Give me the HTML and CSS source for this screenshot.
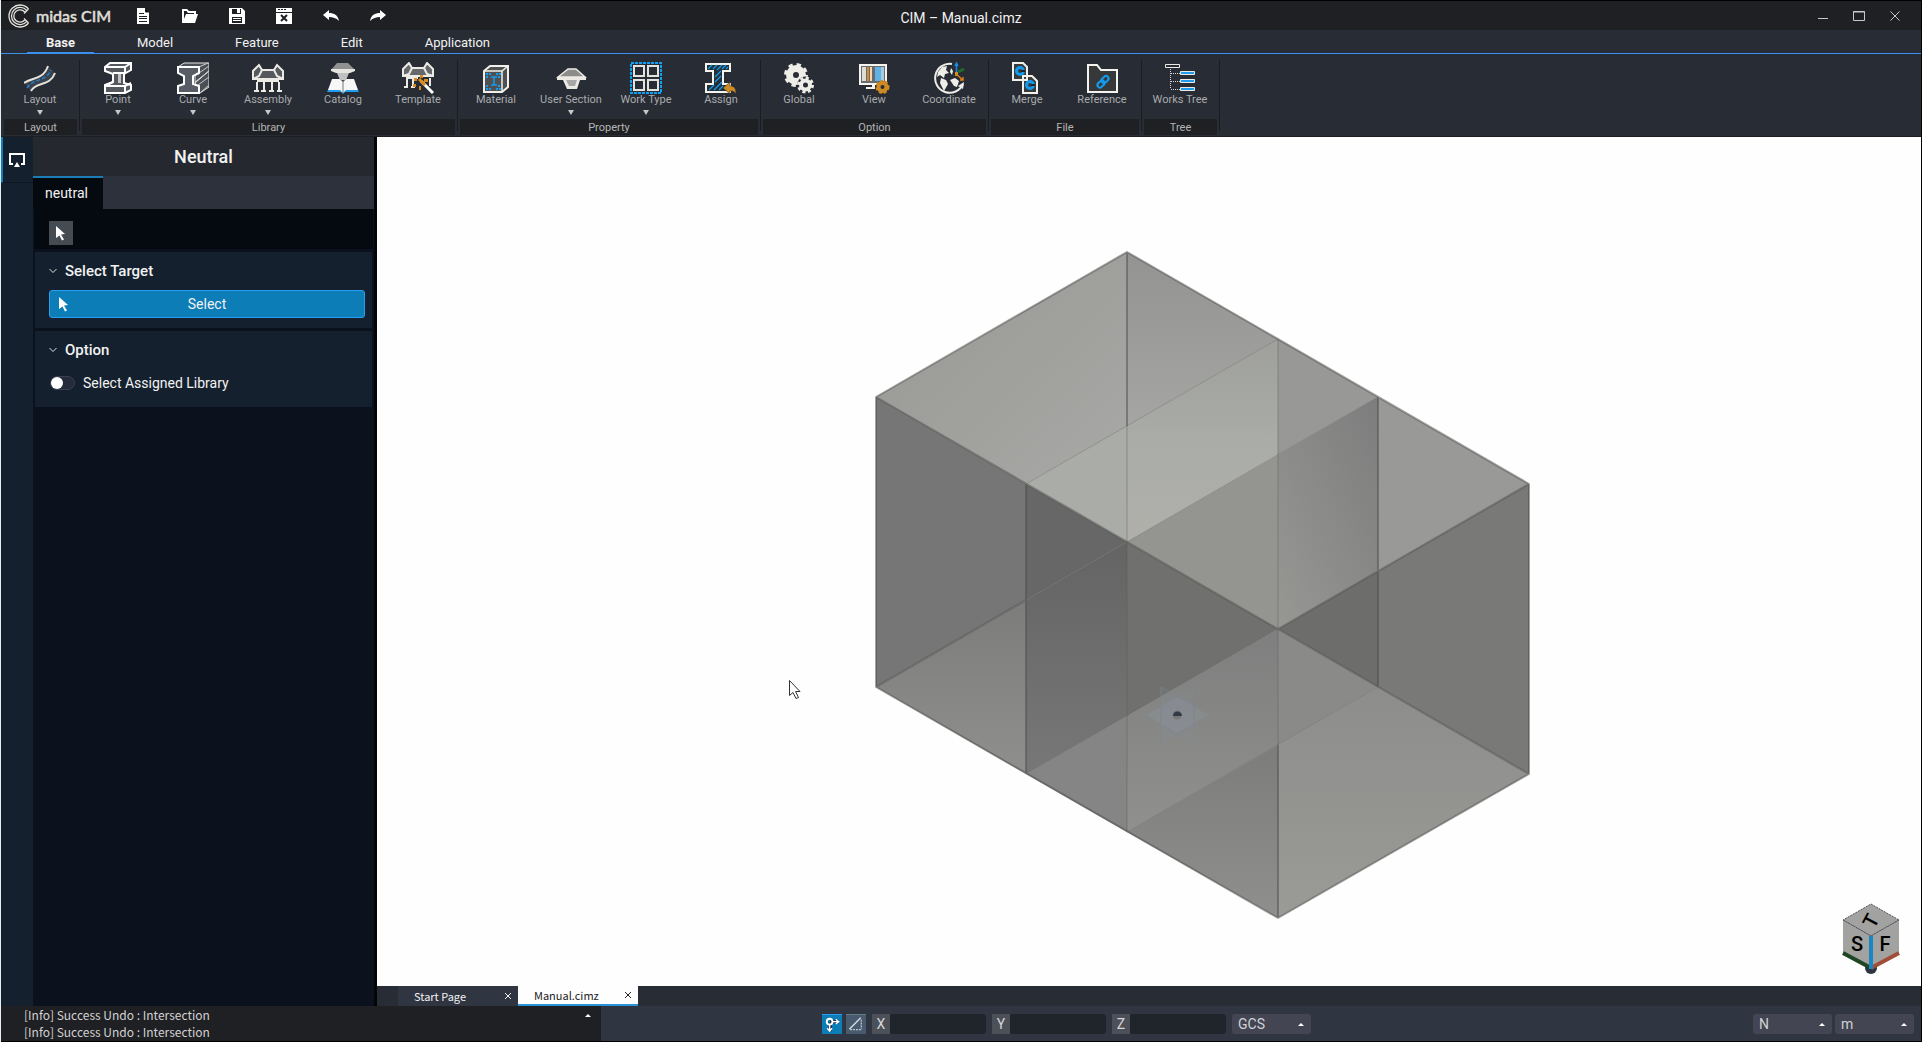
FILE: index.html
```html
<!DOCTYPE html>
<html lang="en">
<head>
<meta charset="utf-8">
<title>CIM - Manual.cimz</title>
<link rel="stylesheet" href="styles.css">
</head>
<body>
<div class="app">
  <header class="titlebar">
    <div class="brand">
      <svg class="brand-mark" viewBox="0 0 24 24" fill="none" stroke="#e4e2dc" stroke-width="1.3"><path d="M20.5 5A11 11 0 1 0 20.5 19M18.8 6.600A8.600 8.600 0 1 0 18.800 17.400M17 8.300A6.200 6.200 0 1 0 17 15.700M20.500 5L16 9.500M20.500 19L16 14.500"/></svg>
      <span class="brand-name">midas CIM</span>
    </div>
    <nav class="quick" aria-label="Quick access">
      <button aria-label="New"><svg viewBox="0 0 16 16"><path fill="#fff" d="M2 0h8l4 4v12H2z"/><path stroke="#1f2024" d="M4 5.500h5M4 8.500h8M4 10.500h8M4 13.500h8M10.500 0v4H14"/></svg></button>
      <button aria-label="Open"><svg viewBox="0 0 16 16"><path fill="#fff" d="M0 15V1h5l2 2h7v3h2l-3 9zM2 3v8l2-5h8V5H6L4.500 3z" fill-rule="evenodd"/></svg></button>
      <button aria-label="Save"><svg viewBox="0 0 16 16"><path fill="#fff" fill-rule="evenodd" d="M0 0h13l3 3v13H0zM3 1v5h9V1zM3 9v6h10V9z"/><path fill="#fff" d="M8 1h3v4H8zM4 10h8v1H4zM4 12h8v1H4z"/></svg></button>
      <button aria-label="Close file"><svg viewBox="0 0 16 16"><path fill="#fff" d="M0 0h16v16H0z"/><path stroke="#1f2024" fill="none" d="M0 4.500h16M2 1.500h2M5 1.500h2M8 1.500h2"/><path stroke="#1f2024" stroke-width="2" d="M5 7l6 6M11 7l-6 6"/></svg></button>
      <button aria-label="Undo"><svg viewBox="0 0 16 16"><path fill="#fff" d="M0 7l6-5v3c5 0 9 2 10 8-3-3-6-4-10-4v3z"/></svg></button>
      <button aria-label="Redo"><svg viewBox="0 0 16 16"><path fill="#fff" d="M16 7l-6-5v3C5 5 1 7 0 13c3-3 6-4 10-4v3z"/></svg></button>
    </nav>
    <h1 class="doc-title">CIM – Manual.cimz</h1>
    <div class="window-controls">
      <button aria-label="Minimize"><svg viewBox="0 0 12 12"><path d="M1 8.500h10"/></svg></button>
      <button aria-label="Maximize"><svg viewBox="0 0 12 12"><path d="M.5 1.500h11v9H.5zM0 2h12"/></svg></button>
      <button aria-label="Close"><svg viewBox="0 0 12 12"><path d="M1.500 1.500l9 9M10.500 1.500l-9 9"/></svg></button>
    </div>
  </header>

  <nav class="menu" aria-label="Ribbon tabs">
    <button class="active">Base</button><button>Model</button><button>Feature</button><button>Edit</button><button>Application</button>
  </nav>

  <div class="ribbon">
    <section class="group">
      <div class="tools">
        <button class="tool drop"><svg viewBox="0 0 32 32" fill="none"><path fill="#3c4149" d="M0 21C9 15 19 18 24 4l7 7C26 25 12 19 7 29z"/><path stroke="#e6e3dc" stroke-width="2" d="M0 21C9 15 19 18 24 4M7 29C12 19 26 25 31 11"/><path stroke="#1f7fd0" stroke-width="1.500" stroke-dasharray="4 2" d="M3 26c6-10 19-6 24-18"/></svg>Layout</button>
      </div>
      <h2>Layout</h2>
    </section>
    <section class="group">
      <div class="tools">
        <button class="tool drop"><svg viewBox="0 0 32 32"><path fill="#55585e" stroke="#fff" stroke-width="2" d="M3 5l5-4h21v7l-7 4v9l7 2v5l-6 3H3v-8l8-3v-8l-8-3z"/><path fill="none" stroke="#fff" stroke-width="2" d="M3 5h20l6-4M23 5v6H11M11 20l-8 4h20l6-3M23 24v7"/><path fill="#c2c2c2" d="M16 12h3v9h-3z"/></svg>Point</button>
        <button class="tool drop"><svg viewBox="0 0 32 32"><path fill="#4b5057" stroke="#e8e6e2" stroke-width="1" d="M1 5l6-4h25v8L18 21v-9h4V5z"/><path fill="#4b5057" stroke="#e8e6e2" d="M18 21l14-12v16l-9 6z"/><path stroke="#ccc" d="M22 5l9-4M22 11l10-7M18 20L32 9M21 23l11-8M23 31l9-8"/><path fill="#585c64" stroke="#fff" stroke-width="2" d="M1 5h21v6l-6 3v8l6 2v7H1v-7l6-2v-8l-6-3z"/></svg>Curve</button>
        <button class="tool drop"><svg viewBox="0 0 32 32"><path fill="#55585c" stroke="#eceae4" stroke-width="2" d="M1 17V9l6-6 3 5h12l3-5 6 6v8z"/><path fill="none" stroke="#eceae4" stroke-width="2" d="M1 17l6-3 3-6M31 17l-6-3-3-6M5 19h22M5 20v9M12 20v9M20 20v9M27 20v9M2 29h5M9 29h5M17 29h5M25 29h5"/></svg>Assembly</button>
        <button class="tool"><svg viewBox="0 0 32 32"><path fill="#209bee" d="M3 24h26l3 6H18l-2 2-2-2H0z"/><path fill="#f7f7f7" d="M5 17h8l3 3 3-3h8l4 11H19l-3 3-3-3H1z"/><path fill="#919191" d="M4 8l6-7h11l7 7-5 2H9z"/><path fill="#e7e5e1" d="M4 7h24v2l-5 2H9L4 9z"/><path fill="#bfc0c1" d="M10 11h12l-3 7h-6z"/><path stroke="#777" d="M16 18v13"/></svg>Catalog</button>
        <button class="tool"><svg viewBox="0 0 32 32"><path fill="#66696c" stroke="#eceae4" stroke-width="2" d="M1 14V7l6-6 3 5h12l3-5 6 6v7z"/><path fill="none" stroke="#eceae4" stroke-width="2" d="M1 14l6-2 3-6M31 14l-6-2-3-6M4 16h12M5 17v8M11 17v8M28 16v8M2 25h4M9 25h4"/><path stroke="#fff" stroke-width="3" d="M19 19l12 12"/><path stroke="#d98a1d" stroke-width="3" d="M17 17l6 6"/><path fill="#d98a1d" d="M18 13h3v3h-3zM12 16h3v3h-3zM22 17h4v3h-4zM11 22h3v3h-3zM17 24h2v4h-2z"/></svg>Template</button>
      </div>
      <h2>Library</h2>
    </section>
    <section class="group">
      <div class="tools">
        <button class="tool"><svg viewBox="0 0 32 32"><path fill="#4e5052" stroke="#f1efe9" stroke-width="2" d="M4 9l6-5h18v21l-6 5H4z"/><path fill="none" stroke="#f1efe9" stroke-width="1.500" d="M4 9h18l6-5M22 9v21"/><path stroke="#149cf0" stroke-width="2" stroke-dasharray="2 1" d="M6 12h5M16 12h5M6 15h3M18 15h3M6 24h3M18 24h3M6 27h5M16 27h5"/><path stroke="#149cf0" fill="none" stroke-width="1.500" d="M11 15h6M14 15v8M11 23h6"/></svg>Material</button>
        <button class="tool drop"><svg viewBox="0 0 32 32"><path fill="#8c8c89" stroke="#eceae4" stroke-width="1.500" d="M3 15L13 7h8l9 8z"/><path fill="#eceae4" d="M2 15h29v3h-6l-3 9H12L8 18H2z"/><path fill="#a8a8a6" d="M11 18h11l-2 6h-6z"/></svg>User Section</button>
        <button class="tool drop"><svg viewBox="0 0 32 32" fill="none"><path stroke="#119ff2" stroke-width="2" stroke-dasharray="3 1" d="M1 1h30v30H1z"/><path stroke="#e3e2df" stroke-width="2" d="M4 4h10v10H4zM18 4h10v10H18zM4 18h10v10H4zM18 18h10v10H18z"/></svg>Work Type</button>
        <button class="tool"><svg viewBox="0 0 32 32"><path fill="#22303a" stroke="#f4f2ed" stroke-width="2" d="M1 2h24v7h-7v13h7v8H1v-8h7V9H1z"/><path stroke="#159df0" stroke-width="1.200" d="M3 7l4-4M8 7l4-4M12 8l5-5M17 7l4-4M21 7l2-2M10 15l6-6M10 20l6-6M4 28l5-5M9 28l8-8M14 28l4-4"/><path fill="#ce8b22" stroke="#282c34" stroke-width=".5" d="M18 26l7-6v4c4 0 6 2 6 8-2-3-3-3-6-3v3z"/></svg>Assign</button>
      </div>
      <h2>Property</h2>
    </section>
    <section class="group">
      <div class="tools">
        <button class="tool"><svg viewBox="0 0 32 32" fill="none" stroke="#efede8"><circle cx="13" cy="13" r="6.500" stroke-width="7"/><circle cx="13" cy="13" r="10.500" stroke-width="3" stroke-dasharray="4.300 4"/><circle cx="22.500" cy="23" r="8.500" fill="#282c34" stroke="none"/><circle cx="22.500" cy="23" r="4.500" stroke-width="4"/><circle cx="22.500" cy="23" r="7" stroke-width="3" stroke-dasharray="3 2.500"/></svg>Global</button>
        <button class="tool"><svg viewBox="0 0 32 32"><path fill="#686b6e" stroke="#f5f3ee" stroke-width="2" d="M2 3h26v19H2z"/><path fill="#ddd" d="M4 5h4v14H4z"/><path fill="#d78d29" d="M9 5h2v14H9z"/><path fill="#f7d6af" d="M12 5h2v14h-2z"/><path fill="#5fb2e3" d="M17 5h6v14h-6z"/><path fill="#a9cae0" d="M23 5h3v14h-3z"/><path fill="#f5f3ee" d="M14 23h3v4H8v-2h6z"/><circle cx="24.500" cy="25" r="4" stroke="#ce8b22" stroke-width="4" fill="none"/><circle cx="24.500" cy="25" r="6" stroke="#ce8b22" stroke-width="2" stroke-dasharray="3 2" fill="none"/></svg>View</button>
        <button class="tool"><svg viewBox="0 0 32 32"><path fill="none" stroke="#efede8" stroke-width="2" d="M19 2A14.500 14.500 0 1 0 30 22"/><path fill="#efede8" d="M9 5l5-1-1 4 3 3-4 1-1 4-4-3-3 2 1-5zM8 16l5 2 2 4-4 7-4-8zM17 18l5-2 4 3-2 6-3-1zM18 6l2 3-1 4-2-3z"/><path fill="#efede8" d="M25 24l6-4-1 7z"/><path stroke="#128fe5" stroke-width="1.500" d="M23.500 11V2M22 4l1.500-3L25 4"/><path stroke="#236b2c" stroke-width="3" d="M25 10l6-3"/><path stroke="#dd7f16" fill="none" stroke-width="1.500" d="M23 12l7 6M30 15v3h-3"/><path fill="#ce8b22" d="M22 10h3v4h-3z"/></svg>Coordinate</button>
      </div>
      <h2>Option</h2>
    </section>
    <section class="group">
      <div class="tools">
        <button class="tool"><svg viewBox="0 0 32 32"><path fill="#393c3d" stroke="#f3f1ec" stroke-width="2" d="M2 1h10l4 4v13H2zM12 14h9l5 5v12H12z"/><circle cx="9" cy="9" r="3.500" fill="none" stroke="#119cf0" stroke-width="3"/><circle cx="19" cy="23" r="3.500" fill="none" stroke="#119cf0" stroke-width="3"/><path fill="#222" d="M10 8h4v2h-4zM20 22h4v2h-4z"/></svg>Merge</button>
        <button class="tool"><svg viewBox="0 0 32 32" fill="none"><path fill="#363839" stroke="#f5f3ee" stroke-width="2" d="M2 3h9l4 5h16v22H2z"/><g stroke="#119cf0" stroke-width="2"><rect x="15" y="15" width="8" height="5" rx="2.500" transform="rotate(-45 19 17.500)"/><rect x="11" y="19.500" width="8" height="5" rx="2.500" transform="rotate(-45 15 22)"/></g></svg>Reference</button>
      </div>
      <h2>File</h2>
    </section>
    <section class="group">
      <div class="tools">
        <button class="tool"><svg viewBox="0 0 32 32"><path fill="none" stroke="#eceae4" d="M1.500 2.500h14v3h-14z"/><path fill="none" stroke="#d8d8d8" stroke-dasharray="1 1" d="M6.500 7v20M7 11.500h9M7 19.500h9M7 27.500h9"/><path fill="#209bee" stroke="#eceae4" d="M16.500 9.500h14v3h-14zM16.500 17.500h14v3h-14zM16.500 25.500h14v3h-14z"/></svg>Works Tree</button>
      </div>
      <h2>Tree</h2>
    </section>
  </div>

  <main class="workspace">
    <aside class="rail">
      <button class="rail-item" aria-label="Neutral"><svg viewBox="0 0 16 14"><path fill="none" stroke="#fff" stroke-width="2" d="M4 11H1V1h14v10h-3"/><path fill="#fff" d="M8 9l3 5H5z"/></svg></button>
    </aside>
    <aside class="panel">
      <h2 class="panel-title">Neutral</h2>
      <div class="panel-tabs"><button>neutral</button></div>
      <div class="panel-tools"><button aria-label="Pointer"><svg class="pointer" viewBox="0 0 10 15"><path fill="#fff" d="M0 0l9 8-4 .5 3 5-2 1-2.500-5L0 12z"/></svg></button></div>
      <section class="card">
        <h3><svg class="chev" viewBox="0 0 8 6"><path d="M.5 1l3.500 3.500L7.500 1"/></svg>Select Target</h3>
        <button class="select-btn"><svg class="pointer" viewBox="0 0 10 15"><path fill="#fff" d="M0 0l9 8-4 .5 3 5-2 1-2.500-5L0 12z"/></svg><span>Select</span></button>
      </section>
      <section class="card">
        <h3><svg class="chev" viewBox="0 0 8 6"><path d="M.5 1l3.500 3.500L7.500 1"/></svg>Option</h3>
        <label class="switch"><input type="checkbox">Select Assigned Library</label>
      </section>
    </aside>
    <div class="stage">
      <svg class="viewport" viewBox="377 137 1544 849" role="img" aria-label="Two overlapping solids">
        <defs>
          <linearGradient id="g1" x1="0" y1="0" x2="1" y2="1"><stop offset="0" stop-color="#979794"/><stop offset="1" stop-color="#a8a9a6"/></linearGradient>
          <linearGradient id="g2" x1="0" y1="0" x2="0" y2="1"><stop offset="0" stop-color="#939391"/><stop offset="1" stop-color="#a5a6a3"/></linearGradient>
          <linearGradient id="g3" x1="0" y1="0" x2="0" y2="1"><stop offset="0" stop-color="#9fa09c"/><stop offset=".5" stop-color="#a9aca7"/><stop offset="1" stop-color="#b0afab"/></linearGradient>
          <linearGradient id="g4" x1="1" y1="0" x2="0" y2="1"><stop offset="0" stop-color="#7c7d7c"/><stop offset=".5" stop-color="#8a8b89"/><stop offset="1" stop-color="#979794"/></linearGradient>
          <linearGradient id="g5" x1="0" y1="0" x2="0" y2="1"><stop offset="0" stop-color="#7c7c7b"/><stop offset="1" stop-color="#8f8f8d"/></linearGradient>
          <linearGradient id="g6" x1="0" y1="0" x2="0" y2="1"><stop offset="0" stop-color="#7e7f7e"/><stop offset="1" stop-color="#90918e"/></linearGradient>
          <linearGradient id="g7" x1="0" y1="0" x2="0" y2="1"><stop offset="0" stop-color="#646464"/><stop offset="1" stop-color="#777777"/></linearGradient>
          <linearGradient id="g8" x1="0" y1="0" x2="0" y2="1"><stop offset="0" stop-color="#8d8e8c"/><stop offset="1" stop-color="#9a9a96"/></linearGradient>
        </defs>
        <path fill="url(#g1)" d="M876 397L1127 252V426L1026 484z"/>
        <path fill="url(#g2)" d="M1127 252L1278 339L1127 426z"/>
        <path fill="#aaaca8" d="M1026 484L1127 426V542z"/>
        <path fill="url(#g3)" d="M1127 426L1278 339V455L1127 542z"/>
        <path fill="#989996" d="M1278 339L1378 397L1278 455z"/>
        <path fill="#949591" d="M1127 542L1278 455V629z"/>
        <path fill="url(#g4)" d="M1278 455L1378 397V571L1278 629z"/>
        <path fill="#999a97" d="M1378 397L1529 484L1378 571z"/>
        <path fill="#757675" d="M876 397L1026 484V600L876 687z"/>
        <path fill="url(#g5)" d="M876 687L1026 600V774z"/>
        <path fill="#676767" d="M1026 484L1127 542L1026 600z"/>
        <path fill="url(#g7)" d="M1026 600L1127 542V716L1026 774z"/>
        <path fill="#70706f" d="M1127 542L1278 629L1127 716z"/>
        <path fill="#848584" d="M1026 774L1127 716V832z"/>
        <path fill="url(#g6)" d="M1127 716L1278 629V745L1127 832z"/>
        <path fill="url(#g5)" d="M1127 832L1278 745V918z"/>
        <path fill="#6d6d6c" d="M1278 629L1378 571V687z"/>
        <path fill="#797977" d="M1378 571L1529 484V774L1378 687z"/>
        <path fill="#8a8b89" d="M1278 629L1378 687L1278 745z"/>
        <path fill="url(#g8)" d="M1278 745L1378 687L1529 774L1278 918z"/>
        <g fill="none" stroke-linejoin="round">
          <path stroke="#4c4c4a" stroke-opacity=".5" stroke-width="2" d="M876 397L1127 252L1529 484V774L1278 918L876 687zL1278 629L1529 484M1026 484V774M1378 397V571M1378 571V687M876 687L1026 600M1127 252V426M1278 745V918M1278 629L1529 774"/>
          <path stroke="#555" stroke-opacity=".4" d="M1026 484L1278 339M1127 542L1378 397M1127 542V832M1026 600L1127 542M1026 774L1278 629V745M1127 832L1378 687M1127 426V542M1278 339V629"/>
        </g>
        <g fill="#8e97a3" fill-opacity=".3" stroke="#7f8893" stroke-opacity=".4"><path d="M1146 715L1177 697L1209 715L1177 733z"/><path d="M1161 687L1194 706V743L1161 725z" fill-opacity=".1"/><path d="M1194 687L1161 706V743L1194 725z" fill-opacity=".1"/><path d="M1161 687v56l33-18M1194 687v56l-33-18" fill="none"/></g>
        <circle cx="1177" cy="715" r="4.500" fill="#77787a"/><path fill="#333945" d="M1173 716a4.500 4.500 0 0 1 9 0z"/>
        <path fill="#fff" stroke="#333" d="M789.500 680.500v15l3.500-3 3 6 2.500-1-3-6h4.500z"/>
        <g>
          <circle cx="1871" cy="968" r="6" fill="#2d3440"/>
          <path fill="#a2a3a1" stroke="#4e4f5a" stroke-dasharray="2 1" d="M1871 904L1899 920L1871 936L1843 920z"/>
          <path fill="#a2a3a1" d="M1843 920L1871 936V968L1843 953zM1899 920L1871 936V968L1899 953z"/>
          <path fill="none" stroke="#4e4f5a" stroke-dasharray="2 1" d="M1843 920L1871 936L1899 920"/>
          <path stroke="#1f4523" stroke-width="4" d="M1843 953l28 15"/><path stroke="#a14e38" stroke-width="4" d="M1899 953l-28 15"/><path stroke="#1a86c3" stroke-width="4" d="M1871 936v33"/>
          <text class="cube-face" x="1857" y="951">S</text><text class="cube-face" x="1885" y="951">F</text><text class="cube-face" transform="translate(1877 924) rotate(-62)">T</text>
        </g>
      </svg>
      <nav class="doc-tabs" aria-label="Open documents">
        <div class="doc"><a href="#start">Start Page</a><button aria-label="Close Start Page"><svg viewBox="0 0 8 8"><path d="M1 1l6 6M7 1L1 7"/></svg></button></div>
        <div class="doc current"><a href="#manual">Manual.cimz</a><button aria-label="Close Manual.cimz"><svg viewBox="0 0 8 8"><path d="M1 1l6 6M7 1L1 7"/></svg></button></div>
      </nav>
    </div>
  </main>

  <footer class="status">
    <div class="log">
      <div><p>[Info] Success Undo : Intersection</p><p>[Info] Success Undo : Intersection</p></div>
      <button class="log-up" aria-label="Expand messages"></button>
    </div>
    <div class="coords">
      <button class="snap on" aria-label="Snap"><svg viewBox="0 0 20 20" fill="none"><path stroke="#17304a" stroke-width="4" d="M8 8v9M8 7h9"/><circle cx="7.500" cy="7" r="3" stroke="#fff" stroke-width="2"/><path stroke="#fff" stroke-width="1.500" d="M7.500 10v7M5 14l2.500 3 2.500-3M11 7h6M14 4.500L17 7l-3 2.500"/></svg></button>
      <button class="snap" aria-label="Angle"><svg viewBox="0 0 20 20" fill="none"><path stroke="#d8dde2" stroke-width="1.500" d="M3 15L15 3"/><path stroke="#e8ecef" stroke-dasharray="2 1" d="M4 15.500h12M15.500 5v10"/></svg></button>
      <label class="axis"><span>X</span><input type="text"></label>
      <label class="axis"><span>Y</span><input type="text"></label>
      <label class="axis"><span>Z</span><input type="text"></label>
      <span class="picker"><select aria-label="Coordinate system"><option>GCS</option></select></span>
    </div>
    <div class="units">
      <span class="picker"><select aria-label="Force unit"><option>N</option></select></span>
      <span class="picker"><select aria-label="Length unit"><option>m</option></select></span>
    </div>
  </footer>
</div>
</body>
</html>
```
FILE: styles.css
```css
* { box-sizing: border-box; }
body {
  margin: 0;
  background: #000;
  color: #f2f2f2;
  font: 14px/20px Roboto, "Liberation Sans", sans-serif;
}
h1, h2, h3, p { margin: 0; font-weight: 400; }
button, input, select { font: inherit; color: inherit; border: 0; padding: 0; margin: 0; background: none; }
svg { display: block; }

.app {
  height: 100vh;
  display: flex;
  flex-direction: column;
  padding: 1px 1px 1px 0;
  border-left: 1px solid #e8edf0;
}

/* Title bar */
.titlebar {
  display: grid;
  grid-template-columns: 1fr auto 1fr;
  grid-template-areas: "left title right";
  align-items: center;
  height: 29px;
  background: #1f2024;
}
.brand { grid-area: left; display: flex; align-items: center; gap: 4px; padding-left: 7px; }
.brand-mark { width: 24px; height: 24px; }
.brand-name { font: 500 16px/20px Lato, sans-serif; color: #dddbd6; -webkit-text-stroke: 0.5px #dddbd6; }
.quick { grid-area: left; display: flex; gap: 31px; padding-left: 134px; }
.quick svg { width: 16px; height: 16px; }
.doc-title { grid-area: title; padding-top: 4px; font-size: 14px; }
.window-controls { grid-area: right; display: flex; justify-content: flex-end; gap: 24px; padding-right: 20px; }
.window-controls svg { width: 12px; height: 12px; fill: none; stroke: #c8c8c8; }

/* Ribbon tabs */
.menu {
  display: flex;
  gap: 24px;
  height: 24px;
  padding-left: 26px;
  background: #282c34;
  border-bottom: 1px solid #3d8fee;
  font-size: 13px;
}
.menu button { padding: 3px 19px 0; border-bottom: 1px solid transparent; }
.menu .active { font-weight: 700; border-color: #3d8fee; }

/* Ribbon */
.ribbon {
  display: flex;
  height: 83px;
  padding: 6px 0 1px 2px;
  background: #282c34;
  border-bottom: 1px solid #1d1f24;
}
.group { display: flex; flex-direction: column; justify-content: space-between; padding-right: 3px; position: relative; }
.group::after { content: ""; position: absolute; right: 1px; top: 0; bottom: 4px; width: 1px; background: #1a1c21; }
.group h2 { margin: 0 1px; height: 16px; font-size: 11px; line-height: 17px; text-align: center; color: #b4b4b4; background: #1f2024; }
.tools { display: flex; }
.tool {
  width: 75px;
  display: flex;
  flex-direction: column;
  align-items: center;
  font-size: 11px;
  line-height: 12px;
  color: #a9abae;
  white-space: nowrap;
  padding: 2px 1px 0 0;
}
.tool svg { width: 32px; height: 32px; }
.drop::after { content: ""; margin-top: 4px; border: 3px solid transparent; border-top: 5px solid #c8c8c8; border-bottom: 0; }

/* Workspace */
.workspace { flex: 1; min-height: 0; display: flex; }
.rail { width: 32px; background: #14202d; }
.rail-item { display: flex; width: 32px; height: 46px; padding: 16px 0 0 6px; border-left: 2px solid #0e7fbb; border-bottom: 1px solid #0d1520; }
.rail-item svg { width: 16px; height: 14px; }
.panel { width: 344px; background: #0b121d; border-right: 3px solid #030508; }
.panel-title { height: 39px; font: 500 18px/39px Roboto, sans-serif; text-align: center; background: #25282f; }
.panel-tabs { height: 33px; background: #2c313c; }
.panel-tabs button { height: 33px; padding: 0 15px 2px 12px; background: #050a10; border-top: 2px solid #1c7db5; }
.panel-tools { margin: 0 1px; height: 40px; padding: 12px 15px 0; background: #050a10; }
.panel-tools button { display: grid; place-items: center; width: 24px; height: 24px; background: #454b52; }
.pointer { width: 10px; height: 15px; }
.card { height: 76px; margin: 3px 2px 0; padding: 9px 7px 0 14px; background: #14202d; }
.card h3 { display: flex; align-items: center; gap: 8px; font-size: 15px; font-weight: 500; }
.chev { width: 8px; height: 6px; fill: none; stroke: #ddd; }
.select-btn {
  display: flex;
  align-items: center;
  width: 100%;
  height: 28px;
  margin-top: 9px;
  padding: 0 19px 0 9px;
  background: #0d7db7;
  border: 1px solid #2a9df0;
  border-radius: 3px;
}
.select-btn span { flex: 1; }
.switch { display: flex; align-items: center; gap: 8px; margin-top: 13px; padding-left: 1px; }
.switch input { appearance: none; width: 25px; height: 14px; background: #262b3b; border: 1px solid #3a4050; border-radius: 7px; }
.switch input::before { content: ""; display: block; width: 12px; height: 12px; border-radius: 6px; background: #fff; }

.stage { flex: 1; min-width: 0; display: flex; flex-direction: column; background: #fefefe; }
.viewport { flex: 1; min-height: 0; width: 100%; }
.cube-face { font: 500 20px Roboto, sans-serif; text-anchor: middle; fill: #000; }
.doc-tabs { display: flex; height: 20px; padding-left: 21px; background: #282c34; }
.doc { display: flex; align-items: center; justify-content: space-between; width: 120px; padding: 0 6px 0 16px; background: #2f3541; font: 11px/18px "Noto Sans CJK KR", sans-serif; }
.doc a { color: inherit; text-decoration: none; }
.doc svg { width: 8px; height: 8px; fill: none; stroke: currentColor; }
.current { background: #fefefe; color: #222; border-bottom: 2px solid #2a93d8; }

/* Status bar */
.status { display: flex; height: 35px; background: #2f3541; }
.log {
  display: flex;
  justify-content: space-between;
  width: 600px;
  padding: 0 10px 0 23px;
  overflow: hidden;
  color: #d2d2d2;
  background: #1f2024;
  font: 12px/17px "Noto Sans CJK KR", sans-serif;
}
.log-up { height: 3px; margin-top: 8px; border: 3px solid transparent; border-bottom-color: #fff; border-top: 0; }
.coords { display: flex; align-items: center; gap: 6px; padding-left: 221px; }
.snap { width: 20px; height: 20px; background: #475a6e; border-top: 1px solid #5f7f80; }
.snap svg { width: 20px; height: 19px; }
.snap + .snap { margin-left: -2px; }
.snap.on { background: #0d7db7; border-color: #2a9df0; }
.axis { display: flex; width: 114px; height: 20px; color: #d6d6d6; }
.axis span { width: 18px; text-align: center; background: #4c5058; font-size: 14px; }
.axis input { flex: 1; min-width: 0; background: #20242b; border-radius: 0 3px 3px 0; }
.picker { position: relative; display: flex; width: 79px; height: 20px; }
.picker::after { content: ""; position: absolute; right: 7px; top: 9px; border: 3px solid transparent; border-bottom-color: #fff; border-top: 0; }
.picker select { appearance: none; width: 100%; padding-left: 6px; color: #cfd2d6; background: #434553; border-radius: 3px; }
.units { display: flex; align-items: center; gap: 3px; margin-left: auto; padding-right: 7px; }
```
